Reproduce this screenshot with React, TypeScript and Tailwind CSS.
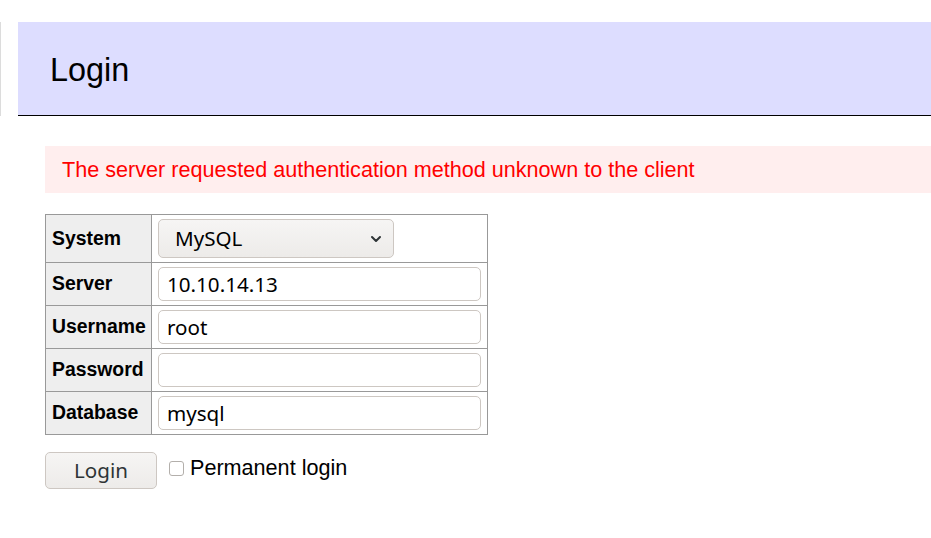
function MenuEdge() {
  return <div className="w-px shrink-0 bg-[#dcdcdc]" />;
}

function Header() {
  return (
    <div className="flex h-[94px]">
      <MenuEdge />
      <div className="ml-[17px] flex flex-1 items-center border-b border-black bg-[#ddf] pl-[32px] pt-[3px]">
        <h2 className="font-['Liberation_Sans',Arial,sans-serif] text-[32.4px] leading-none text-black">Login</h2>
      </div>
    </div>
  );
}

function ErrorBox() {
  return (
    <div className="ml-[45px] mt-[30px] flex h-[47px] items-center bg-[#fee] pl-[17px]">
      <p className="font-['Liberation_Sans',Arial,sans-serif] text-[21.6px] leading-none text-[#f00]">
        The server requested authentication method unknown to the client
      </p>
    </div>
  );
}

function Chevron() {
  return (
    <svg width="12" height="8" viewBox="0 0 12 8" className="shrink-0">
      <path d="M2 2 L6 6 L10 2" fill="none" stroke="#2e3436" strokeWidth="2" strokeLinecap="round" strokeLinejoin="round" />
    </svg>
  );
}

function SystemSelect() {
  return (
    <div className="flex h-[39px] w-[236px] items-center justify-between rounded-[5px] border border-[#cdc7c2] bg-gradient-to-b from-[#f6f5f4] to-[#edebe9] pl-[16px] pr-[11px]">
      <span className="font-['Noto_Sans',sans-serif] text-[20.6px] leading-none text-black">MySQL</span>
      <Chevron />
    </div>
  );
}

function TextField({ value }: { value: string }) {
  return (
    <div className="flex h-[34px] w-[323px] items-center rounded-[5px] border border-[#cdc7c2] bg-white pl-[8px]">
      <span className="font-['Noto_Sans',sans-serif] text-[20.6px] leading-none text-black">{value}</span>
    </div>
  );
}

function Row({ label, children }: { label: string; children: React.ReactNode }) {
  return (
    <tr>
      <th className="w-[106px] border border-[#999] bg-[#eee] pl-[6px] text-left align-middle font-['Liberation_Sans',Arial,sans-serif] text-[19.4px] font-bold text-black">
        {label}
      </th>
      <td className="border border-[#999] px-[6px] py-[4px] align-middle">{children}</td>
    </tr>
  );
}

function LoginForm() {
  return (
    <table className="ml-[45px] mt-[21px] border-collapse">
      <tbody>
        <Row label="System">
          <SystemSelect />
        </Row>
        <Row label="Server">
          <TextField value="10.10.14.13" />
        </Row>
        <Row label="Username">
          <TextField value="root" />
        </Row>
        <Row label="Password">
          <TextField value="" />
        </Row>
        <Row label="Database">
          <TextField value="mysql" />
        </Row>
      </tbody>
    </table>
  );
}

function Actions() {
  return (
    <div className="ml-[45px] mt-[17px] flex items-center">
      <button className="flex h-[37px] w-[112px] items-center justify-center rounded-[5px] border border-[#cdc7c2] bg-gradient-to-b from-[#f6f5f4] to-[#edebe9] font-['Noto_Sans',sans-serif] text-[20.6px] leading-none text-[#2e3436]">
        Login
      </button>
      <label className="ml-[12px] flex items-center -mt-[5px]">
        <span className="h-[15px] w-[15px] rounded-[3px] border border-[#b3afab] bg-white" />
        <span className="ml-[6px] font-['Liberation_Sans',Arial,sans-serif] text-[21.6px] leading-none text-black">Permanent login</span>
      </label>
    </div>
  );
}

export default function App() {
  return (
    <div className="h-[538px] w-[931px] overflow-hidden bg-white pt-[22px]">
      <Header />
      <ErrorBox />
      <LoginForm />
      <Actions />
    </div>
  );
}
